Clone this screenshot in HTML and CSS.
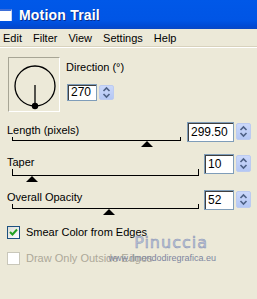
FILE: index.html
```html
<!DOCTYPE html>
<html lang="en">
  <head>
    <meta charset="UTF-8" />
    <meta name="viewport" content="width=device-width, initial-scale=1.0" />
    <title>Motion Trail</title>
    <link rel="stylesheet" href="styles.css">
  </head>
  <body>
    <div class="titlebar">
      <span class="appicon"></span>
      <span class="title">Motion Trail</span>
    </div>
    <div class="menubar">
      <span>Edit</span>
      <span>Filter</span>
      <span>View</span>
      <span>Settings</span>
      <span>Help</span>
    </div>
    <div class="panel">
      <div class="dir-row">
        <div class="dial">
          <svg width="50" height="53" viewBox="0 0 50 53">
            <circle cx="26" cy="28" r="20" fill="none" stroke="#000" stroke-width="1.3" />
            <line x1="26" y1="27" x2="26" y2="47" stroke="#000" stroke-width="1.3" />
            <circle cx="26" cy="48" r="3.2" fill="#000" />
          </svg>
        </div>
        <div class="dir-ctrl">
          <div class="label">Direction (°)</div>
          <div class="spin small">
            <div class="field">270</div>
            <div class="arrows">
              <svg width="15" height="15" viewBox="0 0 15 15">
                <path d="M4.5 6 L7.5 3 L10.5 6 M4.5 9 L7.5 12 L10.5 9" fill="none" stroke="#4d6185" stroke-width="1.6" />
              </svg>
            </div>
          </div>
        </div>
      </div>

      <div class="row row-len">
        <div class="slide">
          <div class="label">Length (pixels)</div>
          <div class="track"><span class="thumb" style="left: 80%"></span></div>
        </div>
        <div class="spin">
          <div class="field wide">299.50</div>
          <div class="arrows">
            <svg width="15" height="17" viewBox="0 0 15 17">
              <path d="M4.5 7 L7.5 4 L10.5 7 M4.5 10 L7.5 13 L10.5 10" fill="none" stroke="#4d6185" stroke-width="1.6" />
            </svg>
          </div>
        </div>
      </div>

      <div class="row row-taper">
        <div class="slide">
          <div class="label">Taper</div>
          <div class="track"><span class="thumb" style="left: 10%"></span></div>
        </div>
        <div class="spin">
          <div class="field">10</div>
          <div class="arrows">
            <svg width="15" height="17" viewBox="0 0 15 17">
              <path d="M4.5 7 L7.5 4 L10.5 7 M4.5 10 L7.5 13 L10.5 10" fill="none" stroke="#4d6185" stroke-width="1.6" />
            </svg>
          </div>
        </div>
      </div>

      <div class="row row-opac">
        <div class="slide">
          <div class="label">Overall Opacity</div>
          <div class="track"><span class="thumb" style="left: 52%"></span></div>
        </div>
        <div class="spin">
          <div class="field">52</div>
          <div class="arrows">
            <svg width="15" height="17" viewBox="0 0 15 17">
              <path d="M4.5 7 L7.5 4 L10.5 7 M4.5 10 L7.5 13 L10.5 10" fill="none" stroke="#4d6185" stroke-width="1.6" />
            </svg>
          </div>
        </div>
      </div>

      <div class="check check-on">
        <span class="box">
          <svg width="11" height="11" viewBox="0 0 11 11">
            <path d="M2 5 L4.5 7.5 L9 2.5" fill="none" stroke="#21a121" stroke-width="2" />
          </svg>
        </span>
        <span>Smear Color from Edges</span>
      </div>
      <div class="check check-off">
        <span class="box"></span>
        <span>Draw Only Outside Edges</span>
      </div>

      <div class="watermark">
        <div class="wm-name">Pinuccia</div>
        <div class="wm-site">www.ilmondodiregrafica.eu</div>
      </div>
    </div>
  </body>
</html>
```

FILE: styles.css
```css
* {
  margin: 0;
  padding: 0;
  box-sizing: border-box;
}
body {
  width: 257px;
  height: 299px;
  overflow: hidden;
  background-color: #ece9d8;
  font-family: "Liberation Sans", Arial, sans-serif;
  font-size: 11px;
  color: #000;
}
.titlebar {
  height: 29px;
  display: flex;
  align-items: center;
  background: linear-gradient(#0058e8 0%, #0055e5 70%, #004bd6 88%, #0a47c4 100%);
}
.appicon {
  width: 12px;
  height: 12px;
  margin-top: 1px;
  background-color: #fff;
  border-top: 2px solid #3d6ed8;
  border-right: 1px solid #c8d4f0;
}
.title {
  margin-left: 7px;
  margin-top: 1px;
  color: #fff;
  font-weight: bold;
  font-size: 14px;
  letter-spacing: 0.2px;
  text-shadow: 1px 1px 0 #0a2c8c;
}
.menubar {
  height: 19px;
  display: flex;
  align-items: center;
  gap: 11px;
  padding-left: 3px;
  border-bottom: 1px solid #fff;
  box-shadow: inset 0 -1px 0 #d8d2bd;
}
.panel {
  position: relative;
  padding: 9px 6px 0 7px;
}
.label {
  line-height: 13px;
  white-space: nowrap;
}
.dir-row {
  display: flex;
  gap: 6px;
}
.dial {
  width: 52px;
  height: 55px;
  margin-left: 1px;
  border: 1px solid;
  border-color: #a7a595 #fff #fff #a7a595;
  background-color: #ece9d8;
}
.dial svg {
  display: block;
}
.dir-ctrl {
  padding-top: 4px;
}
.dir-ctrl .spin {
  margin-top: 10px;
  margin-left: 1px;
}
.spin {
  display: flex;
  align-items: flex-start;
  gap: 2px;
}
.field {
  width: 30px;
  height: 20px;
  padding-left: 3px;
  border: 1px solid #7f9db9;
  box-shadow: inset 1px 1px 0 #404040;
  background-color: #fff;
  font-size: 12px;
  line-height: 18px;
}
.field.wide {
  width: 47px;
}
.small .field {
  height: 17px;
  line-height: 15px;
}
.arrows {
  width: 15px;
  height: 17px;
  margin-top: 1px;
  border-radius: 2px;
  background: linear-gradient(#cbd8fa, #b4c7f4);
  border: 1px solid #bccbf0;
}
.small .arrows {
  height: 15px;
  margin-top: 1px;
}
.arrows svg {
  display: block;
  margin: -1px 0 0 -1px;
}
.row {
  display: flex;
  align-items: flex-start;
}
.slide {
  flex: 1;
}
.track {
  position: relative;
  margin-left: 5px;
  border: 1px solid #000;
  border-top: none;
}
.thumb {
  position: absolute;
  top: 100%;
  margin-top: 1px;
  margin-left: -6px;
  width: 0;
  height: 0;
  border-left: 6px solid transparent;
  border-right: 6px solid transparent;
  border-bottom: 6px solid #000;
}
.row-len {
  margin-top: 10px;
  gap: 6px;
}
.row-len .slide {
  padding-top: 2px;
}
.row-len .track {
  height: 4px;
}
.row-taper {
  margin-top: 12px;
  gap: 5px;
}
.row-taper .slide {
  padding-top: 2px;
}
.row-taper .track {
  height: 7px;
}
.row-opac {
  margin-top: 14px;
  gap: 5px;
}
.row-opac .slide {
  padding-top: 1px;
}
.row-opac .track {
  height: 5px;
}
.check {
  display: flex;
  align-items: center;
  gap: 6px;
  height: 13px;
  line-height: 13px;
  white-space: nowrap;
}
.check .box {
  width: 13px;
  height: 13px;
  border: 1px solid #1c5180;
  background: linear-gradient(135deg, #dcdcd5, #fff);
}
.check .box svg {
  display: block;
}
.check-on {
  margin-top: 16px;
}
.check-off {
  margin-top: 13px;
  color: #aca899;
}
.check-off .box {
  border-color: #c9c7ba;
  background: #fff;
}
.watermark {
  position: absolute;
  left: 106px;
  top: 186px;
  text-align: right;
  width: 110px;
  pointer-events: none;
}
.wm-name {
  font-family: "DejaVu Sans", sans-serif;
  font-size: 16px;
  letter-spacing: 1px;
  color: #b9c2d8;
  -webkit-text-stroke: 0.5px #8c97b4;
  padding-right: 8px;
  line-height: 18px;
}
.wm-site {
  font-size: 9px;
  line-height: 12px;
  color: #7d86a0;
}
```
